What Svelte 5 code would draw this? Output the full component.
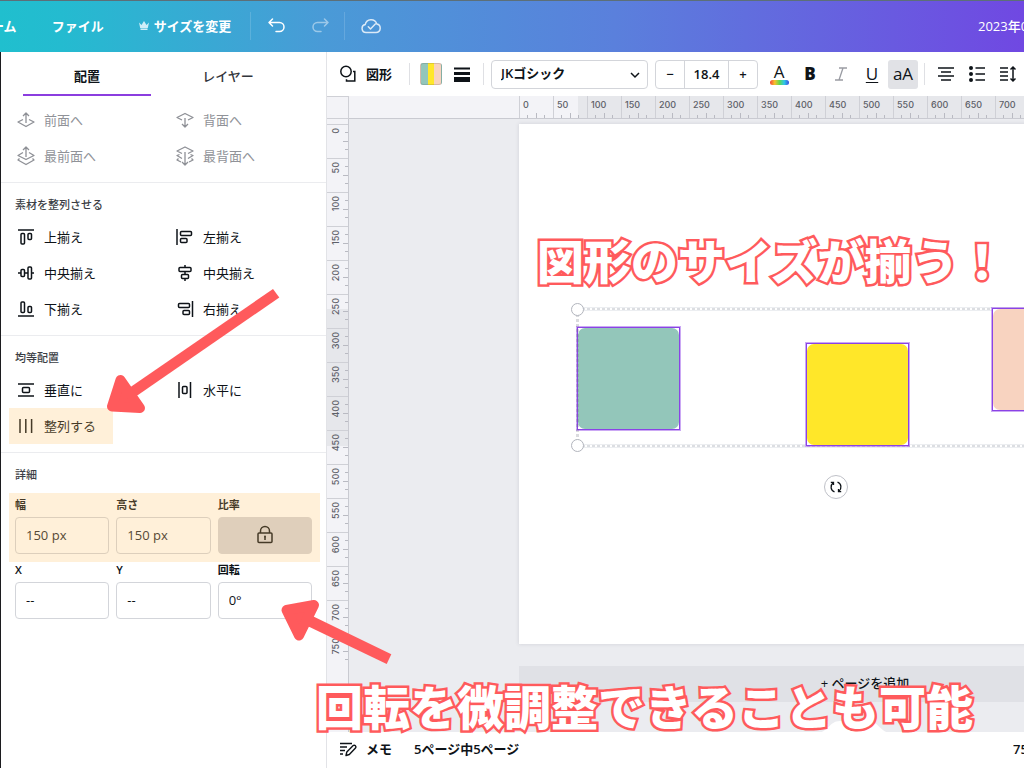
<script>
  const layerActions = [
    { label: '前面へ', d: 'M8 10.5 3 13l8 4.5 8-4.5-5-2.5M11 14V4.5M8 7l3-3 3 3' },
    { label: '背面へ', d: 'M8 11 3 8.5l8-4 8 4-5 2.5M11 9v9M8 15l3 3 3-3' },
    { label: '最前面へ', d: 'M8 7.5 3 10.5l8 4 8-4-5-3M11 12V2.5M8 5l3-3 3 3M4.5 13.5 3 15l8 4.5 8-4.5-1.5-1.5' },
    { label: '最背面へ', d: 'M8 8.500 3 6l8-4 8 4-5 2.500M11 7v13M8 17l3 3 3-3M5.500 9.500 3 10.500l5 3M16.500 9.500l2.500 1-5 3M4.500 13.500 3 15l4 2M17.500 13.500 19 15l-4 2' }
  ];
  const alignActions = [
    { label: '上揃え', d: 'M3 4h16', r: [[6, 7.5, 3.5, 10.5], [13, 7.5, 3.5, 6]] },
    { label: '左揃え', d: 'M3 3v16', r: [[6.5, 5.5, 11, 4], [6.5, 12.5, 6.5, 4]] },
    { label: '中央揃え', d: 'M3 11h3M9.500 11H13M16.500 11H19', r: [[6, 7.5, 3.5, 7], [13, 5, 3.5, 12]] },
    { label: '中央揃え', d: 'M11 3v2.500M11 9.500v3M11 16.500V19', r: [[5, 5.5, 12, 4], [7.5, 12.5, 7, 4]] },
    { label: '下揃え', d: 'M3 18h16', r: [[6, 4, 3.5, 10.5], [13, 8.5, 3.5, 6]] },
    { label: '右揃え', d: 'M18.500 3v16', r: [[4.5, 5.5, 11, 4], [9, 12.5, 6.5, 4]] }
  ];
  const spreadActions = [
    { label: '垂直に', d: 'M3 5h16M3 17h16', r: [[7.5, 8.5, 7, 5]] },
    { label: '水平に', d: 'M5 3v16M16.500 3v16', r: [[8.5, 7.5, 4.5, 7]] },
    { label: '整列する', d: 'M5 4v14M10.800 4v14M16.600 4v14', r: [], marked: true }
  ];
  const marks = Array.from({ length: 16 }, (_, i) => i * 50);
  let width = $state('150 px');
  let height = $state('150 px');
  let x = $state('--');
  let y = $state('--');
  let angle = $state('0°');
  let size = $state('18.4');
</script>

{#snippet action(item)}
  <button class="action" class:marked={item.marked}>
    <svg class="ico" viewBox="0 0 22 22" aria-hidden="true">
      <path d={item.d} />
      {#each item.r ?? [] as [rx, ry, w, h]}
        <rect x={rx} y={ry} width={w} height={h} rx="1" />
      {/each}
    </svg>
    <span>{item.label}</span>
  </button>
{/snippet}

<div class="app">
  <header>
    <button class="menu home">ホーム</button>
    <button class="menu">ファイル</button>
    <button class="menu">
      <svg width="10" height="9" viewBox="0 0 10 9" aria-hidden="true"><path d="M0 1.500 2.500 4 5 0l2.500 4L10 1.500 8.800 7H1.200zM1.500 7.600h7V9h-7z" fill="#cfeef8" /></svg>
      <span>サイズを変更</span>
    </button>
    <i class="hsep"></i>
    <button class="hicon" aria-label="元に戻す">
      <svg width="20" height="20" viewBox="0 0 20 20"><path d="M6.500 3 3 6.500 6.500 10M3.500 6.500h10a4.500 4.500 0 0 1 0 9H10" /></svg>
    </button>
    <button class="hicon dim" aria-label="やり直す">
      <svg width="20" height="20" viewBox="0 0 20 20"><path d="m14.500 3 3.500 3.500-3.500 3.500M17.500 6.500h-10a4.500 4.500 0 0 0 0 9H11" /></svg>
    </button>
    <i class="hsep"></i>
    <button class="hicon cloud" aria-label="保存済み">
      <svg width="22" height="20" viewBox="-2 0 22 20"><path d="M5 16.500a4 4 0 0 1-.8-7.900A6 6 0 0 1 15.800 8 4.300 4.300 0 0 1 15 16.500zM7.300 10.800l2.200 2.200 4.800-5" /></svg>
    </button>
    <span class="title">2023年06</span>
  </header>

  <div class="body">
    <aside>
      <div class="tabs" role="tablist">
        <button role="tab" aria-selected="true" class="tab on">配置</button>
        <button role="tab" aria-selected="false" class="tab">レイヤー</button>
      </div>
      <section class="layers">
        <div class="grid">
          {#each layerActions as item}{@render action(item)}{/each}
        </div>
      </section>
      <section>
        <h2>素材を整列させる</h2>
        <div class="grid">
          {#each alignActions as item}{@render action(item)}{/each}
        </div>
      </section>
      <section>
        <h2>均等配置</h2>
        <div class="grid">
          {#each spreadActions as item}{@render action(item)}{/each}
        </div>
      </section>
      <section>
        <h2>詳細</h2>
        <div class="fields marked">
          <label>幅<input bind:value={width} /></label>
          <label>高さ<input bind:value={height} /></label>
          <div class="field">
            <span id="ratio">比率</span>
            <button class="lock" aria-labelledby="ratio">
              <svg width="18" height="20" viewBox="0 0 18 20"><path d="M3 8h12a1 1 0 0 1 1 1v7.500a1 1 0 0 1-1 1H3a1 1 0 0 1-1-1V9a1 1 0 0 1 1-1zM4.500 8V6a4.500 4.500 0 0 1 9 0v2M9 12v3" /><circle cx="9" cy="11.500" r="1" /></svg>
            </button>
          </div>
        </div>
        <div class="fields">
          <label>X<input bind:value={x} /></label>
          <label>Y<input bind:value={y} /></label>
          <label>回転<input bind:value={angle} /></label>
        </div>
      </section>
    </aside>

    <main>
      <div class="toolbar">
        <button class="shape">
          <svg width="18" height="18" viewBox="0 0 18 18" aria-hidden="true"><circle cx="7" cy="6.500" r="5.200" /><path d="M14 6.500h1.800V16H7.500v-1.800" /></svg>
          <span>図形</span>
        </button>
        <i class="sep"></i>
        <button class="swatch" aria-label="カラー"></button>
        <button class="plain" aria-label="線のスタイル">
          <svg width="18" height="18" viewBox="0 0 18 18"><path d="M1 2.500h16v2H1zM1 7h16v3H1zM1 12h16v5H1z" fill="#0e1318" /></svg>
        </button>
        <i class="sep"></i>
        <div class="select">
          <select aria-label="フォント"><option>JKゴシック</option></select>
          <svg width="12" height="8" viewBox="0 0 12 8" aria-hidden="true"><path d="m2 2 4 4 4-4" /></svg>
        </div>
        <div class="stepper">
          <button aria-label="小さく">−</button>
          <input aria-label="文字サイズ" bind:value={size} />
          <button aria-label="大きく">+</button>
        </div>
        <div class="format">
          <button class="color" aria-label="文字の色">A</button>
          <button aria-label="太字"><b>B</b></button>
          <button aria-label="斜体">
            <svg width="14" height="16" viewBox="0 0 14 16"><path class="slant" d="M5 2h8M1 14h8M9 2 5 14" /></svg>
          </button>
          <button aria-label="下線"><u>U</u></button>
          <button class="case">aA</button>
        </div>
        <i class="sep tight"></i>
        <div class="para">
          <button class="plain" aria-label="配置">
            <svg width="18" height="18" viewBox="0 0 18 18"><path d="M1 3h16M4 7h10M1 11h16M4 15h10" /></svg>
          </button>
          <button class="plain" aria-label="リスト">
            <svg width="18" height="18" viewBox="0 0 18 18"><path d="M7.500 3H17M7.500 9H17M7.500 15H17" /><g class="dots"><circle cx="3" cy="3" r="2" /><circle cx="3" cy="9" r="2" /><circle cx="3" cy="15" r="2" /></g></svg>
          </button>
          <button class="plain" aria-label="スペース">
            <svg width="18" height="18" viewBox="0 0 18 18"><path d="M1 3h8M1 7h8M1 11h8M1 15h8M14 2.500v13M11.500 4.500 14 2l2.500 2.500M11.500 13.500 14 16l2.500-2.500" /></svg>
          </button>
        </div>
      </div>

      <div class="work">
        <div class="corner"></div>
        <div class="ruler top">
          {#each marks as m}<div class="cell">{m}</div>{/each}
        </div>
        <div class="ruler side">
          {#each marks as m}<div class="cell"><span>{m}</span></div>{/each}
        </div>
        <div class="stage">
          <div class="page">
            <div class="band row upper"></div>
            <div class="band row lower"></div>
            <div class="box green"></div>
            <div class="box yellow"></div>
            <div class="box pink"></div>
            <div class="band col"></div>
            <i class="handle h1"></i>
            <i class="handle h2"></i>
            <button class="rotate" aria-label="回転">
              <svg width="14" height="14" viewBox="0 0 14 14"><path d="M5.500 11.800C1.500 10.500 1 5.500 4 2.800M1.800 2.300h2.700V5M8.500 2.200c4 1.300 4.500 6.300 1.500 9M12.200 11.700H9.500V9" /></svg>
            </button>
          </div>
          <button class="add">+ ページを追加</button>
        </div>
      </div>

      <footer>
        <button class="pull" aria-label="ページを表示">
          <svg width="76" height="14" viewBox="0 0 76 14"><path d="M0 12C12 12 13 0 24 0h28C63 0 64 12 76 12z" fill="#fff" /><path d="m35 9.500 3-3 3 3" /></svg>
        </button>
        <button class="notes">
          <svg width="18" height="18" viewBox="0 0 18 18" aria-hidden="true"><path d="M1 3.500h12M1 7h7M1 10.500h5M1 14h3M7 15.500l.8-3.500 6.400-6.400a1.400 1.400 0 0 1 2 0l.3.300a1.400 1.400 0 0 1 0 2L10.300 14.500z" /></svg>
          <span>メモ</span>
        </button>
        <span>5ページ中5ページ</span>
        <span class="zoom">75%</span>
      </footer>
    </main>
  </div>

  <svg class="arrows" width="400" height="680" viewBox="0 0 400 680" aria-hidden="true">
    <g fill="#ff5a5c" stroke="#ff5a5c" stroke-linejoin="round">
      <path stroke="none" d="M273 289 279.300 297.500 138 395 126 402 124 392 132 386z" />
      <path stroke-width="10" d="M112 406.500 120.500 380 140 408z" />
      <path stroke="none" d="M391.300 654.300 386.700 664 309 626.700 300 620 304 612 314 616.700z" />
      <path stroke-width="10" d="M286.500 610 314 605 299 635.500z" />
    </g>
  </svg>
  <p class="note n1">図形のサイズが揃う！</p>
  <p class="note n2">回転を微調整できることも可能</p>
</div>

<style>
  :global(body) {
    margin: 0;
  }
  .app {
    position: relative;
    display: flex;
    flex-direction: column;
    height: 100vh;
    overflow: hidden;
    font: 500 13px/20px 'Open Sans', 'Noto Sans CJK JP', sans-serif;
    color: #0e1318;
  }
  .app * {
    box-sizing: border-box;
  }
  button,
  input,
  select {
    font: inherit;
    color: inherit;
  }
  button {
    display: flex;
    align-items: center;
    justify-content: center;
    padding: 0;
    border: 0;
    background: none;
    white-space: nowrap;
  }
  svg {
    display: block;
    flex: none;
    fill: none;
    stroke: #0e1318;
    stroke-width: 1.5;
  }
  svg path[fill] {
    stroke: none;
  }

  header {
    display: flex;
    align-items: center;
    flex: none;
    height: 52px;
    padding-bottom: 2px;
    border-top: 1px solid #5c6f78;
    background: linear-gradient(90deg, #20bfce 0, #24bbd0 6%, #4a9ad7 32%, #5a80dc 60%, #7048e2 100%);
    color: #fff;
    font-weight: 700;
  }
  header svg {
    stroke: #fff;
    stroke-linecap: round;
    stroke-linejoin: round;
  }
  .menu {
    gap: 5px;
    padding: 0 17px 0 18px;
  }
  .home {
    margin-left: -40px;
  }
  .menu svg {
    stroke: none;
  }
  .hsep {
    width: 1px;
    height: 28px;
    margin: 0 3px 0 2px;
    background: rgba(255, 255, 255, 0.15);
  }
  .hicon {
    width: 44px;
    height: 40px;
  }
  .dim {
    opacity: 0.45;
  }
  .cloud {
    opacity: 0.8;
  }
  .title {
    flex: 0 0 46px;
    margin-left: auto;
    overflow: hidden;
    white-space: nowrap;
    font-weight: 500;
  }

  .body {
    display: flex;
    flex: 1;
    min-height: 0;
  }
  aside {
    flex: 0 0 327px;
    border-left: 1px solid #1c1c1f;
    border-right: 1px solid #e2e3e7;
    background: #fff;
  }
  .tabs {
    display: grid;
    grid-template-columns: 1fr 1fr;
    gap: 13px;
    padding: 0 34px 0 22px;
  }
  .tab {
    height: 44px;
    padding-top: 5px;
    border-bottom: 2px solid transparent;
    font-weight: 500;
    color: #33363c;
  }
  .tab.on {
    border-color: #8b3ddf;
    font-weight: 700;
    color: #0e1318;
  }
  section {
    padding: 12px 14px 8px;
    border-bottom: 1px solid #ebecef;
  }
  section:last-child {
    border: 0;
  }
  .layers {
    padding-top: 6px;
    color: #909298;
  }
  .layers svg {
    stroke: #8e9096;
    stroke-width: 1.3;
  }
  h2 {
    margin: 0 0 4px;
    font-size: 11px;
    line-height: 20px;
    font-weight: 500;
    color: #3b3e45;
  }
  .grid {
    display: grid;
    grid-template-columns: 159px 1fr;
  }
  .action {
    position: relative;
    justify-content: flex-start;
    gap: 7px;
    height: 36px;
    font-weight: 400;
  }
  .ico {
    width: 22px;
    height: 22px;
    stroke-linejoin: round;
  }
  .marked {
    position: relative;
  }
  .marked::after {
    content: '';
    position: absolute;
    background: rgba(255, 189, 89, 0.23);
    pointer-events: none;
  }
  .action.marked::after {
    inset: 0 auto 0 -6px;
    width: 104px;
  }
  .fields {
    display: grid;
    grid-template-columns: repeat(3, 1fr);
    gap: 7px;
    margin-top: 6px;
  }
  .fields.marked {
    margin-top: 10px;
  }
  .fields.marked::after {
    inset: -2px -8px -8px -6px;
  }
  label,
  .field {
    display: flex;
    flex-direction: column;
    gap: 2px;
    font-size: 11px;
    font-weight: 600;
  }
  label input,
  .lock {
    width: 100%;
    height: 37px;
    border: 1px solid #d3d5da;
    border-radius: 4px;
    background: #fff;
    padding: 0 10px 2px;
    font-size: 13px;
    font-weight: 400;
  }
  .marked input,
  .marked .lock {
    color: #22252b;
  }
  .lock {
    background: #d6d5d8;
    border-color: #d6d5d8;
  }
  .lock circle {
    fill: #0e1318;
    stroke: none;
  }

  main {
    display: flex;
    flex-direction: column;
    flex: 1;
    min-width: 0;
  }
  .toolbar {
    display: flex;
    align-items: center;
    flex: none;
    height: 44px;
    padding-left: 12px;
    overflow: hidden;
    background: #fff;
    font-weight: 600;
  }
  .shape {
    gap: 9px;
  }
  .sep {
    flex: none;
    width: 1px;
    height: 22px;
    margin: 0 10px 0 17px;
    background: #dfe0e4;
  }
  .plain {
    flex: none;
    width: 18px;
    height: 28px;
  }
  .swatch {
    flex: none;
    width: 22px;
    height: 22px;
    margin-right: 11px;
    border: 1px solid rgba(80, 80, 80, 0.2);
    border-radius: 3px;
    background: linear-gradient(90deg, #93c6ba 34%, #ffe72b 34% 66%, #f8d3c0 66%);
  }
  .plain + .sep {
    margin: 0 7px 0 12px;
  }
  .select {
    position: relative;
    flex: 0 0 157px;
  }
  .select select {
    width: 100%;
    height: 29px;
    padding: 0 9px 2px;
    border: 1px solid #d3d5da;
    border-radius: 4px;
    appearance: none;
    background: #fff;
  }
  .select svg {
    position: absolute;
    right: 7px;
    top: 11px;
    pointer-events: none;
  }
  .stepper {
    display: flex;
    flex: none;
    height: 29px;
    margin-left: 7px;
    border: 1px solid #d3d5da;
    border-radius: 4px;
  }
  .stepper button {
    width: 28px;
  }
  .stepper input {
    width: 45px;
    padding: 0;
    border: solid #d3d5da;
    border-width: 0 1px;
    background: none;
    text-align: center;
  }
  .format {
    display: flex;
    flex: none;
    margin-left: 6px;
    gap: 1px;
  }
  .format button {
    width: 30px;
    height: 29px;
    font-size: 17px;
    font-weight: 400;
  }
  .format b {
    font-weight: 800;
  }
  .format u {
    text-underline-offset: 2px;
  }
  .format .slant {
    stroke: #9a9ca3;
    stroke-width: 1.3;
  }
  .format .color {
    flex-direction: column;
    line-height: 17px;
    font-weight: 500;
  }
  .color::after {
    content: '';
    width: 19px;
    height: 5px;
    border-radius: 3px;
    background: linear-gradient(90deg, #f0443a, #f9c02c 25%, #62d84e 50%, #2cc8e8 75%, #3a4de0);
  }
  .format .case {
    border-radius: 3px;
    background: #e1e2e6;
  }
  .sep.tight {
    margin: 0 12px 0 6px;
  }
  .para {
    display: flex;
    gap: 13px;
  }
  .dots {
    fill: #0e1318;
    stroke: none;
  }

  .work {
    display: grid;
    grid-template: 23px minmax(0, 1fr) / 22px minmax(0, 1fr);
    flex: 1;
    min-height: 0;
    overflow: hidden;
    background: #ebecf0;
  }
  .corner {
    border: solid #cfd0d6;
    border-width: 1px 1px 1px 0;
    background: #f3f3f7;
  }
  .ruler {
    display: flex;
    overflow: hidden;
    font-family: Inter, sans-serif;
    font-size: 9px;
    line-height: 18px;
    color: #5d6068;
    --tick: #b9bac2;
  }
  .ruler .cell {
    flex: 0 0 34px;
  }
  .top {
    padding-left: 170px;
    border-bottom: 1px solid #c9cad1;
    background: linear-gradient(90deg, #f3f3f7 229px, #e6e7eb 229px);
  }
  .top .cell {
    padding-left: 3px;
    border-left: 1px solid #cfd0d6;
    background:
      linear-gradient(var(--tick), var(--tick)) 7px 100% / 1px 3px no-repeat,
      linear-gradient(var(--tick), var(--tick)) 16px 100% / 1px 5px no-repeat,
      linear-gradient(var(--tick), var(--tick)) 24px 100% / 1px 3px no-repeat;
  }
  .side {
    flex-direction: column;
    padding-top: 5px;
    border-right: 1px solid #c9cad1;
    background: linear-gradient(#f3f3f7 190px, #e6e7eb 190px 327px, #f3f3f7 327px);
  }
  .side .cell {
    display: flex;
    align-items: flex-start;
    padding-top: 3px;
    border-top: 1px solid #cfd0d6;
    background:
      linear-gradient(var(--tick), var(--tick)) 100% 7px / 3px 1px no-repeat,
      linear-gradient(var(--tick), var(--tick)) 100% 16px / 5px 1px no-repeat,
      linear-gradient(var(--tick), var(--tick)) 100% 24px / 3px 1px no-repeat;
  }
  .side span {
    writing-mode: vertical-rl;
    transform: rotate(180deg);
  }
  .stage {
    padding: 5px 0 0 170px;
    overflow: hidden;
  }
  .page {
    position: relative;
    width: 692px;
    height: 520px;
    background: #fff;
    box-shadow: 0 0 4px rgba(60, 64, 80, 0.16);
  }
  .add {
    width: 692px;
    height: 36px;
    margin-top: 22px;
    padding-bottom: 2px;
    background: #e0e1e6;
  }
  .box {
    position: absolute;
    width: 103px;
    height: 103px;
    border: 1px solid #8a43e6;
    outline: 1px solid rgba(139, 61, 230, 0.45);
    background: #fff;
  }
  .box::before {
    content: '';
    display: block;
    height: 100%;
    border-radius: 7px;
    background: var(--c);
  }
  .green {
    --c: #93c6ba;
    left: 58px;
    top: 203px;
  }
  .yellow {
    --c: #ffe729;
    left: 287px;
    top: 219px;
  }
  .pink {
    --c: #f8d3c0;
    left: 473px;
    top: 184px;
  }
  .band {
    position: absolute;
    border: solid #eceef1;
  }
  .row {
    left: 58px;
    width: 518px;
    height: 4px;
    border-width: 1px 0;
    background: repeating-linear-gradient(90deg, #dcdee2 0 3px, #fff 3px 5px);
  }
  .upper {
    top: 183px;
  }
  .lower {
    top: 320px;
  }
  .col {
    left: 57px;
    top: 185px;
    width: 3px;
    height: 136px;
    border: 0;
    background: repeating-linear-gradient(rgba(110, 112, 125, 0.25) 0 3px, transparent 3px 5px);
  }
  .handle {
    position: absolute;
    left: 52px;
    width: 13px;
    height: 13px;
    border: 1px solid #b2b5bd;
    border-radius: 50%;
    background: #fff;
  }
  .h1 {
    top: 179px;
  }
  .h2 {
    top: 315px;
  }
  .rotate {
    position: absolute;
    left: 305px;
    top: 351px;
    width: 24px;
    height: 24px;
    border: 1px solid #bfc1c8;
    border-radius: 50%;
    background: #fff;
  }
  .rotate svg {
    stroke-width: 1.3;
  }

  footer {
    position: relative;
    display: flex;
    align-items: center;
    flex: none;
    gap: 22px;
    height: 36px;
    padding: 0 0 2px 12px;
    background: #fff;
    font-weight: 600;
    white-space: nowrap;
  }
  .notes {
    gap: 9px;
  }
  .notes svg {
    stroke-width: 1.4;
    stroke-linejoin: round;
  }
  .pull {
    position: absolute;
    left: 489px;
    top: -11px;
  }
  .zoom {
    flex: 0 0 11px;
    margin-left: auto;
    overflow: hidden;
  }

  .arrows {
    position: absolute;
    left: 0;
    top: 0;
    pointer-events: none;
  }
  .note {
    position: absolute;
    margin: 0;
    font: 900 47px/60px 'Noto Sans CJK JP', sans-serif;
    color: #fff;
    -webkit-text-stroke: 5px #ff5a5c;
    paint-order: stroke fill;
    white-space: nowrap;
    pointer-events: none;
  }
  .n1 {
    left: 537px;
    top: 229px;
  }
  .n2 {
    left: 316px;
    top: 675px;
  }
</style>
